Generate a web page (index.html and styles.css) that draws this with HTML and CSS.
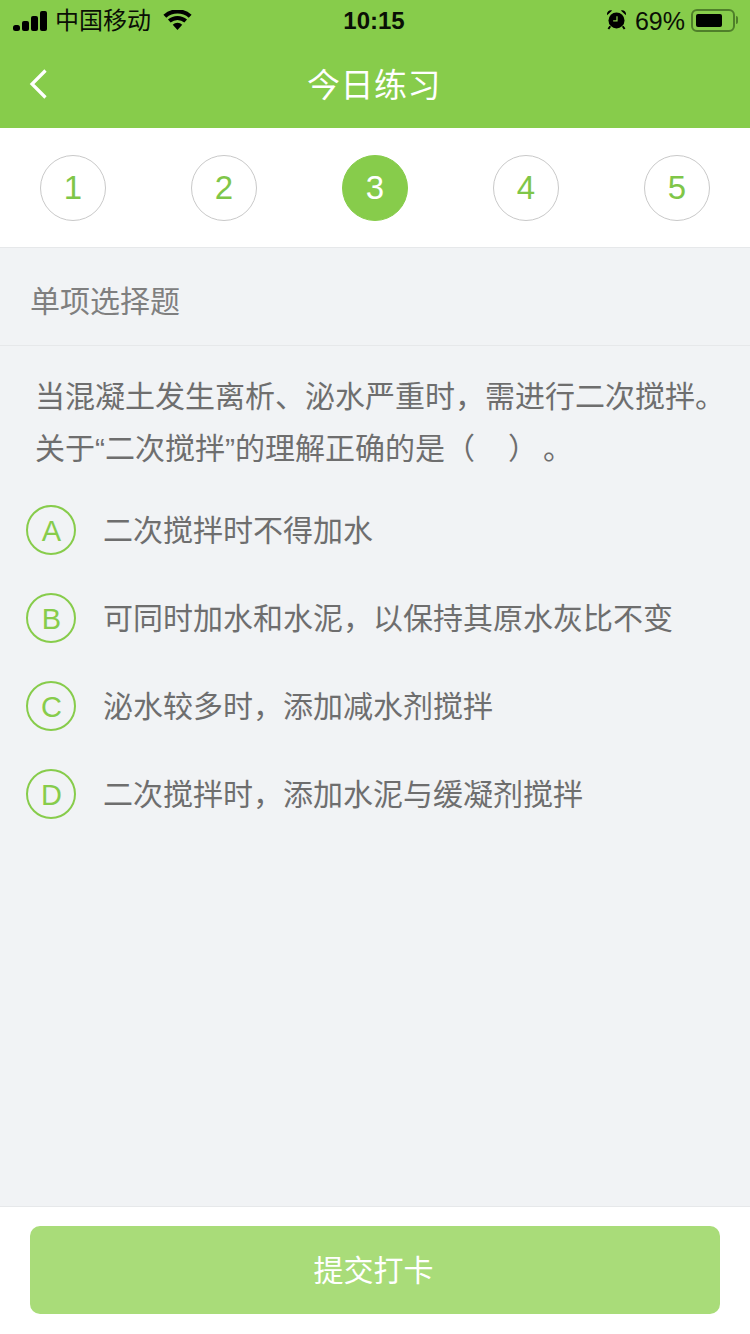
FILE: index.html
```html
<!DOCTYPE html>
<html>
<head>
  <title>今日练习</title>
  <meta name="viewport" content="width=device-width, initial-scale=1.0">
  <link rel="stylesheet" href="styles.css">
</head>
<body>
  <div class="page">
    <header class="top">
      <div class="status">
        <div class="status-left">
          <svg class="signal" width="34" height="20" viewBox="0 0 34 20">
            <rect x="0" y="14" width="7" height="6" rx="2.5"/>
            <rect x="9" y="10" width="7" height="10" rx="2"/>
            <rect x="18" y="5" width="7" height="15" rx="2"/>
            <rect x="27" y="0" width="7" height="20" rx="2"/>
          </svg>
          <span class="carrier">中国移动</span>
          <svg class="wifi" width="29" height="20" viewBox="0 0 30 21">
            <path d="M15 21l-5-5.6a7.5 7.5 0 0 1 10 0z"/>
            <path d="M7.8 13.2L5 10.1a15 15 0 0 1 20 0l-2.8 3.1a11 11 0 0 0-14.4 0z"/>
            <path d="M3.2 8.2L0.2 5a22 22 0 0 1 29.6 0l-3 3.2a18 18 0 0 0-23.6 0z"/>
          </svg>
        </div>
        <div class="clock">10:15</div>
        <div class="status-right">
          <svg class="alarm" width="21" height="21" viewBox="0 0 22 22">
            <circle cx="11" cy="12" r="8.4"/>
            <path d="M1.2 6.5a4 4 0 0 1 5.3-4.9zM20.8 6.5a4 4 0 0 0-5.3-4.9z"/>
            <path d="M4.5 18l-2 3M17.5 18l2 3" stroke="#000" stroke-width="2"/>
            <path d="M11.5 7.5v5H7.5" stroke="#87cc4b" stroke-width="1.3" fill="none"/>
          </svg>
          <span class="percent">69%</span>
          <div class="battery"><div class="battery-level"></div></div>
          <div class="battery-tip"></div>
        </div>
      </div>
      <div class="nav">
        <svg class="back" width="20" height="32" viewBox="0 0 20 32">
          <path d="M17.5 2.5L4 16L17.5 29.5" fill="none" stroke="#fff" stroke-width="3.2"/>
        </svg>
        <h1>今日练习</h1>
      </div>
    </header>

    <div class="steps">
      <div class="step">1</div>
      <div class="step">2</div>
      <div class="step current">3</div>
      <div class="step">4</div>
      <div class="step">5</div>
    </div>

    <main class="content">
      <div class="type">单项选择题</div>
      <p class="question">当混凝土发生离析、泌水严重时，需进行二次搅拌。<br>关于“二次搅拌”的理解正确的是（<span class="blank"></span>）<span class="gap"></span>。</p>
      <ul class="options">
        <li class="option"><span class="letter">A</span><span>二次搅拌时不得加水</span></li>
        <li class="option"><span class="letter">B</span><span>可同时加水和水泥，以保持其原水灰比不变</span></li>
        <li class="option"><span class="letter">C</span><span>泌水较多时，添加减水剂搅拌</span></li>
        <li class="option"><span class="letter">D</span><span>二次搅拌时，添加水泥与缓凝剂搅拌</span></li>
      </ul>
    </main>

    <footer class="bottom">
      <button class="submit">提交打卡</button>
    </footer>
  </div>
</body>
</html>
```

FILE: styles.css
```css
* {
  box-sizing: border-box;
}
body {
  margin: 0;
  padding: 0;
  font-family: "Liberation Sans", "Noto Sans CJK SC", sans-serif;
  background-color: #f1f3f5;
}
.page {
  width: 750px;
  height: 1334px;
  display: flex;
  flex-direction: column;
  overflow: hidden;
}
.top {
  height: 128px;
  background-color: #87cc4b;
}
.status {
  height: 40px;
  padding: 2px 12px 0 13px;
  display: flex;
  align-items: center;
  justify-content: space-between;
  position: relative;
  color: #0a0f05;
}
.status-left {
  display: flex;
  align-items: center;
}
.carrier {
  font-size: 24px;
  margin-left: 8px;
  line-height: 38px;
  margin-top: -1px;
}
.wifi {
  margin-left: 12px;
  margin-top: -3px;
}
.clock {
  position: absolute;
  left: 0;
  right: 0;
  top: 2px;
  padding-right: 2px;
  text-align: center;
  font-size: 24px;
  font-weight: bold;
  line-height: 38px;
}
.status-right {
  display: flex;
  align-items: center;
}
.alarm {
  margin-right: 8px;
  margin-top: -4px;
}
.percent {
  font-size: 25px;
  line-height: 38px;
  margin-right: 6px;
}
.battery {
  width: 44px;
  height: 23px;
  border: 2px solid #4f7f2a;
  border-radius: 6px;
  padding: 3px;
  margin-top: -2px;
}
.battery-level {
  width: 26px;
  height: 13px;
  background-color: #000;
  border-radius: 2px;
}
.battery-tip {
  width: 2px;
  height: 8px;
  margin-left: 1px;
  margin-top: -2px;
  background-color: #4f7f2a;
  border-radius: 0 2px 2px 0;
}
.nav {
  height: 88px;
  display: flex;
  align-items: center;
  justify-content: center;
  position: relative;
}
.nav h1 {
  margin: -3px 2px 0 0;
  font-size: 33px;
  letter-spacing: 0.5px;
  font-weight: normal;
  color: #fff;
}
.back {
  position: absolute;
  left: 28px;
  top: 28px;
}
.steps {
  height: 120px;
  background-color: #fff;
  border-bottom: 1px solid #e6e8ea;
  display: flex;
  align-items: center;
  justify-content: space-between;
  padding: 0 40px;
}
.step {
  width: 66px;
  height: 66px;
  border: 1px solid #c9c9c9;
  border-radius: 50%;
  display: flex;
  align-items: center;
  justify-content: center;
  font-size: 33px;
  color: #7fc648;
}
.step.current {
  background-color: #87cc4b;
  border-color: #87cc4b;
  color: #fff;
}
.content {
  flex: 1;
}
.type {
  height: 98px;
  line-height: 107px;
  padding-left: 30px;
  font-size: 30px;
  color: #7f7f7f;
  border-bottom: 1px solid #e6e8ea;
}
.question {
  margin: 0;
  padding: 25px 0 0 35px;
  font-size: 30px;
  line-height: 52px;
  color: #6e6e6e;
}
.blank {
  display: inline-block;
  width: 33px;
}
.gap {
  display: inline-block;
  width: 5px;
}
.options {
  list-style: none;
  margin: 0;
  padding: 30px 0 0 26px;
}
.option {
  height: 88px;
  display: flex;
  align-items: flex-start;
  font-size: 30px;
  line-height: 52px;
  color: #6e6e6e;
}
.letter {
  width: 50px;
  height: 50px;
  margin-right: 27px;
  flex-shrink: 0;
  border: 2px solid #87cc4b;
  border-radius: 50%;
  display: flex;
  align-items: center;
  justify-content: center;
  font-size: 29px;
  padding: 2px 0 0 1px;
  color: #87cc4b;
}
.bottom {
  height: 128px;
  background-color: #fff;
  border-top: 1px solid #e6e8ea;
  padding: 19px 30px 0;
}
.submit {
  display: block;
  width: 100%;
  height: 88px;
  border: none;
  border-radius: 10px;
  padding: 0 3px 4px 0;
  background-color: #a9dc79;
  color: #fff;
  font-size: 30px;
  font-family: inherit;
}
```
